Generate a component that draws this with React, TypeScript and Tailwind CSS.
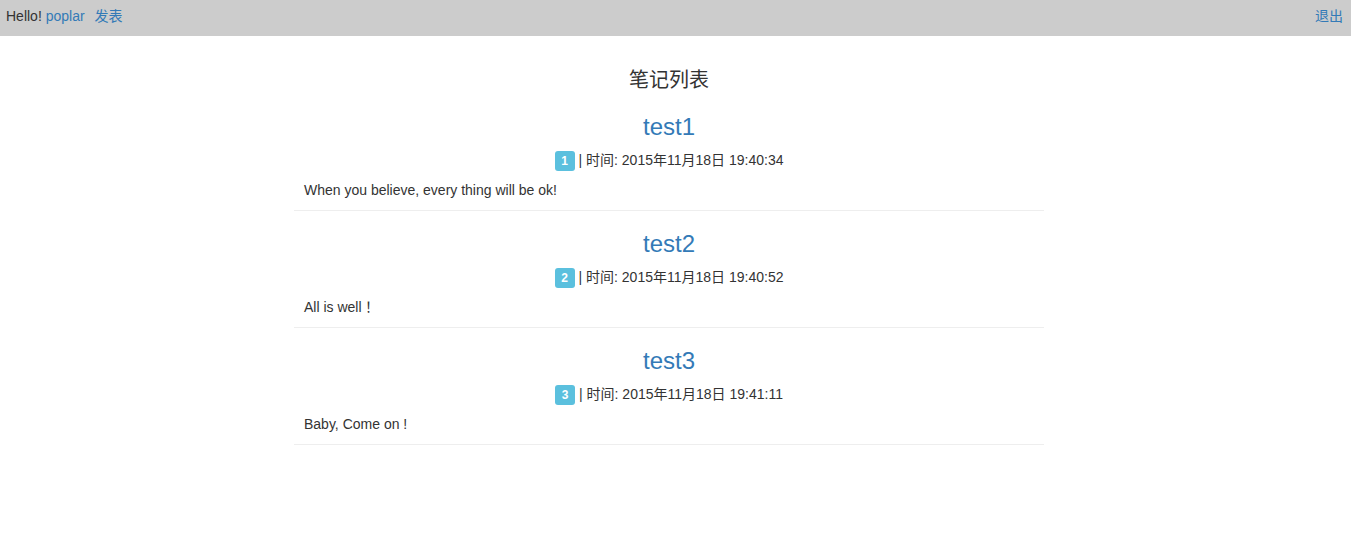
import React from "react";

const notes = [
  { id: 1, title: "test1", time: "2015年11月18日 19:40:34", body: "When you believe, every thing will be ok!" },
  { id: 2, title: "test2", time: "2015年11月18日 19:40:52", body: "All is well！" },
  { id: 3, title: "test3", time: "2015年11月18日 19:41:11", body: "Baby, Come on !" },
];

const font = { fontFamily: '"Liberation Sans", "Noto Sans CJK SC", Arial, sans-serif' };
const bodyFont = { fontFamily: '"Liberation Sans", "Noto Sans CJK TC", Arial, sans-serif' };

export default function App() {
  return (
    <div className="min-h-[543px] bg-white text-[14px] text-[#333]" style={font}>
      <div className="flex h-[36px] items-start justify-between bg-[#cccccc] pl-[6px] pr-[8px] pt-[6px] leading-[20px]">
        <div className="flex">
          <span>Hello!&nbsp;</span>
          <a className="text-[#337ab7]">poplar</a>
          <a className="ml-[10px] text-[#337ab7]">发表</a>
        </div>
        <a className="text-[#337ab7]">退出</a>
      </div>
      <div className="ml-[294px] w-[750px]">
        <h3 className="mt-[30px] h-[28px] text-center text-[20px] leading-[28px] text-[#333]">笔记列表</h3>
        {notes.map((n) => (
          <div key={n.id} className="border-b border-[#eeeeee] pb-[10px] pt-[19px]">
            <div className="h-[28px] text-center text-[24px] leading-[28px] text-[#337ab7]">{n.title}</div>
            <div className="mt-[9px] flex h-[20px] items-center justify-center leading-[20px]">
              <span className="mr-[4px] mt-[2px] flex h-[20px] w-[20px] items-center justify-center rounded-[3px] bg-[#5bc0de] text-[12px] font-bold text-white">
                {n.id}
              </span>
              <span>| 时间: {n.time}</span>
            </div>
            <p className="mt-[10px] h-[20px] px-[10px] leading-[20px]" style={bodyFont}>{n.body}</p>
          </div>
        ))}
      </div>
    </div>
  );
}
